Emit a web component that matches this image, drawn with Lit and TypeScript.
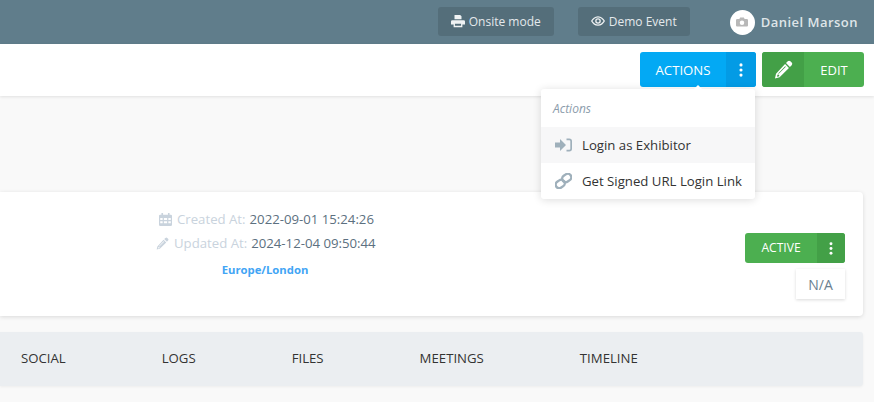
import { LitElement, html, css, svg } from "lit";
import { customElement } from "lit/decorators.js";

const pencil = svg`<path fill-rule="evenodd" d="M11.600 1.100a1.600 1.600 0 0 1 2.200 0l1.100 1.100a1.600 1.600 0 0 1 0 2.200l-1.500 1.500-3.300-3.300 1.500-1.500zM9.300 3.400l3.300 3.300-7.900 7.900-3.900.9.900-3.900 7.600-8.200zM9.400 5.300 3.500 11.300l.5.300 6-5.900-.6-.4zM3.100 12.200l-.6 1.500.4.300 1.500-.4-.1-1.100-1.200-.3z"/>`;
const dots = html`<svg class="dots" viewBox="0 0 4 16" fill="currentColor"><circle cx="2" cy="2.200" r="1.800"/><circle cx="2" cy="8" r="1.800"/><circle cx="2" cy="13.800" r="1.800"/></svg>`;

@customElement("app-root")
export class AppRoot extends LitElement {
  static styles = css`
    :host { display: block; width: 874px; height: 402px; overflow: hidden; background: #f9f9f9; font-family: "Open Sans", sans-serif; font-size: 13px; color: #56697a; }
    .top { height: 44px; background: #607d8b; display: flex; align-items: center; justify-content: flex-end; padding-right: 16px; box-sizing: border-box; color: #e4e9ec; }
    .tbtn { height: 29px; background: #546e7a; border-radius: 3px; display: flex; align-items: center; justify-content: center; gap: 4px; font-size: 12px; box-sizing: border-box; margin-bottom: 2px; }
    .tbtn svg { width: 14px; height: 14px; fill: #f0f3f4; }
    .t1 { width: 116px; margin-right: 24px; }
    .t2 { width: 112px; margin-right: 40px; }
    .avatar { width: 25px; height: 25px; border-radius: 50%; background: #fff; display: flex; align-items: center; justify-content: center; margin-right: 6px; }
    .avatar svg { width: 12px; height: 12px; fill: #b8b8b8; }
    .name { font-size: 13px; font-weight: 600; letter-spacing: .47px; color: #dfe5e8; }
    .sub { height: 52px; background: #fff; box-shadow: 0 1px 3px rgba(0,0,0,.1); display: flex; justify-content: flex-end; gap: 6px; padding: 8px 10px 0 0; box-sizing: border-box; position: relative; }
    .split { height: 35px; border-radius: 3px; display: flex; color: #fff; font-size: 13px; overflow: hidden; }
    .split > div { display: flex; align-items: center; justify-content: center; }
    .dots { width: 4px; height: 14px; }
    .act { width: 116px; background: #03a9f4; }
    .act .l { width: 86px; font-size: 13.2px; }
    .act .r { width: 30px; background: #039be5; }
    .edit { width: 102px; background: #4caf50; }
    .edit .l { width: 42px; background: #43a047; }
    .edit .l svg { width: 19px; height: 19px; fill: #fff; }
    .edit .r { width: 60px; }
    .menu { position: absolute; left: 541px; top: 45px; width: 214px; background: #fff; border-radius: 3px; box-shadow: 0 1px 8px rgba(0,0,0,.14); color: #333; font-size: 13.2px; z-index: 2; }
    .menu::before { content: ""; position: absolute; left: 152px; top: -4px; border: 5px solid transparent; border-top: 0; border-bottom-color: #fff; }
    .mh { height: 38px; display: flex; align-items: center; padding-left: 12px; font-style: italic; font-size: 12px; color: #8c9cab; }
    .mi { height: 36px; display: flex; align-items: center; padding-left: 14px; gap: 10px; }
    .mi svg { width: 17px; height: 16px; fill: #9fb0bb; flex: none; }
    .mi .link { fill: none; stroke: #9fb0bb; stroke-width: 2.400; }
    .mi.on { background: #f7f7f8; }
    .main { padding: 96px 11px 0 0; }
    .card { height: 124px; background: #fff; border-radius: 0 4px 4px 0; box-shadow: 0 1px 4px rgba(0,0,0,.13); display: flex; justify-content: space-between; box-sizing: border-box; padding: 0 18px 0 156px; }
    .meta { width: 222px; padding-top: 15px; font-size: 13.2px; color: #5c7080; }
    .row { height: 24px; display: flex; align-items: center; gap: 4px; white-space: nowrap; }
    .row span { color: #c9d3dd; }
    .row svg { width: 13px; height: 13px; fill: #c9d3dd; margin-right: 1px; }
    .r1 { padding-left: 3px; }
    .tz { margin-top: 7px; width: 218px; text-align: center; font-size: 11.300px; font-weight: 700; color: #42a5f5; }
    .side { display: flex; flex-direction: column; align-items: flex-end; padding-top: 41px; }
    .status { width: 100px; height: 30px; background: #4caf50; border-radius: 3px; color: #fff; font-size: 12.100px; display: flex; overflow: hidden; }
    .status > div { display: flex; align-items: center; justify-content: center; }
    .status .l { width: 72px; padding-bottom: 1px; box-sizing: border-box; }
    .status .r { width: 28px; background: #43a047; }
    .status .dots { height: 13px; }
    .na { width: 49px; height: 30px; margin-top: 6px; background: #fff; box-shadow: 0 1px 3px rgba(0,0,0,.15); display: flex; align-items: center; justify-content: center; font-size: 14px; color: #6b7f91; }
    .tabs { height: 54px; margin-top: 16px; background: #ebeef1; border-radius: 0 3px 3px 0; box-shadow: 0 1px 3px rgba(0,0,0,.05); display: flex; align-items: center; gap: 96px; padding: 0 0 2px 21px; box-sizing: border-box; font-size: 13.200px; color: #333; }
  `;

  render() {
    return html`
      <div class="top">
        <div class="tbtn t1">
          <svg viewBox="0 0 16 16"><path d="M4 1h6.500L12 2.500V6H4V1zM1.500 7h13A1.500 1.500 0 0 1 16 8.500V12h-3v3H3v-3H0V8.500A1.500 1.500 0 0 1 1.500 7zM4.500 11v2.500h7V11h-7z"/></svg>
          Onsite mode
        </div>
        <div class="tbtn t2">
          <svg viewBox="0 0 16 16"><path fill-rule="evenodd" d="M8 2.500c3.600 0 6.500 2.500 8 5.500-1.500 3-4.400 5.500-8 5.500S1.500 11 0 8c1.500-3 4.400-5.500 8-5.500zM8 4C5.400 4 3 5.800 1.600 8 3 10.200 5.400 12 8 12s5-1.800 6.400-4C13 5.800 10.600 4 8 4zm0 .800a3.200 3.200 0 1 1 0 6.400 3.200 3.200 0 0 1 0-6.400zm0 1.500a1.700 1.700 0 1 0 0 3.400 1.700 1.700 0 0 0 0-3.400z"/></svg>
          Demo Event
        </div>
        <div class="avatar">
          <svg viewBox="0 0 16 16"><path fill-rule="evenodd" d="M5.500 2h5l1 2H14.500A1.500 1.500 0 0 1 16 5.500v7a1.500 1.500 0 0 1-1.500 1.500h-13A1.500 1.500 0 0 1 0 12.500v-7A1.500 1.500 0 0 1 1.500 4H4.500l1-2zM8 6a3 3 0 1 0 0 6 3 3 0 0 0 0-6z"/></svg>
        </div>
        <div class="name">Daniel Marson</div>
      </div>
      <div class="sub">
        <div class="split act"><div class="l">ACTIONS</div><div class="r">${dots}</div></div>
        <div class="split edit">
          <div class="l"><svg viewBox="0 0 16 16">${pencil}</svg></div>
          <div class="r">EDIT</div>
        </div>
        <div class="menu">
          <div class="mh">Actions</div>
          <div class="mi on">
            <svg viewBox="0 0 17 16"><path d="M0 5.500h5V2l6 6-6 6v-3.500H0v-5zM11.500 1.500h2.800A2.700 2.700 0 0 1 17 4.200v7.600a2.700 2.700 0 0 1-2.700 2.700h-2.800v-1.700h2.800a1 1 0 0 0 1-1V4.200a1 1 0 0 0-1-1h-2.800V1.500z"/></svg>
            Login as Exhibitor
          </div>
          <div class="mi">
            <svg class="link" viewBox="0 0 17 16"><rect x="7" y="1.500" width="9.500" height="7" rx="3.500" transform="rotate(-35 11.700 5)"/><rect x=".5" y="7.500" width="9.500" height="7" rx="3.500" transform="rotate(-35 5.200 11)"/></svg>
            Get Signed URL Login Link
          </div>
        </div>
      </div>
      <div class="main">
        <div class="card">
          <div class="meta">
            <div class="row r1">
              <svg viewBox="0 0 16 16"><path fill-rule="evenodd" d="M3 0h2v2h6V0h2v2h1.500A1.500 1.500 0 0 1 16 3.500v11a1.500 1.500 0 0 1-1.500 1.500h-13A1.500 1.500 0 0 1 0 14.500v-11A1.500 1.500 0 0 1 1.500 2H3V0zM1.500 6v2.500h3V6h-3zm4.500 0v2.500h4V6H6zm5.500 0v2.500h3V6h-3zM1.500 10v2.500h3V10h-3zm4.500 0v2.500h4V10H6zm5.500 0v2.500h3V10h-3z"/></svg>
              <span>Created At:</span> 2022-09-01 15:24:26
            </div>
            <div class="row">
              <svg viewBox="0 0 16 16">${pencil}</svg>
              <span>Updated At:</span> 2024-12-04 09:50:44
            </div>
            <div class="tz">Europe/London</div>
          </div>
          <div class="side">
            <div class="status"><div class="l">ACTIVE</div><div class="r">${dots}</div></div>
            <div class="na">N/A</div>
          </div>
        </div>
        <div class="tabs">
          <div>SOCIAL</div><div>LOGS</div><div>FILES</div><div>MEETINGS</div><div>TIMELINE</div>
        </div>
      </div>
    `;
  }
}
